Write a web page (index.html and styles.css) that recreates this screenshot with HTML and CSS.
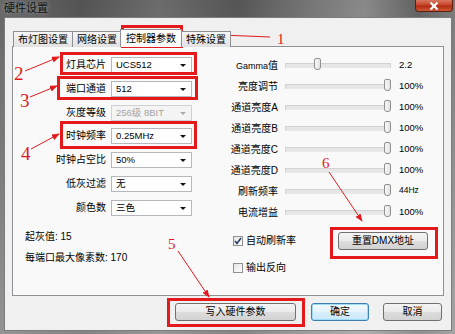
FILE: index.html
```html
<!DOCTYPE html>
<html lang="zh-CN">
<head>
    <meta charset="UTF-8">
    <title>硬件设置</title>
    <link rel="stylesheet" href="styles.css">
</head>
<body>
    <div class="window">
        <div class="titlebar">
            <span class="title">硬件设置</span>
            <span class="close">
                <svg width="10" height="8" viewBox="0 0 10 8"><path d="M1.5 0.5 L8.5 7.5 M8.5 0.5 L1.5 7.5" stroke="#fff" stroke-width="2.2"/></svg>
            </span>
        </div>
        <div class="client">
            <div class="tabs">
                <div class="tab">布灯图设置</div>
                <div class="tab">网络设置</div>
                <div class="tab active">控制器参数</div>
                <div class="tab">特殊设置</div>
            </div>
            <div class="panel">
                <div class="left">
                    <div class="fields">
                        <span class="f-label">灯具芯片</span><div class="combo">UCS512</div>
                        <span class="f-label">端口通道</span><div class="combo">512</div>
                        <span class="f-label">灰度等级</span><div class="combo disabled">256级 8BIT</div>
                        <span class="f-label">时钟频率</span><div class="combo">0.25MHz</div>
                        <span class="f-label">时钟占空比</span><div class="combo">50%</div>
                        <span class="f-label">低灰过滤</span><div class="combo">无</div>
                        <span class="f-label">颜色数</span><div class="combo">三色</div>
                    </div>
                    <p class="info">起灰值: 15</p>
                    <p class="info">每端口最大像素数: 170</p>
                </div>
                <div class="right">
                    <div class="sliders">
                        <span class="s-label"><small>Gamma</small>值</span><div class="slider"><span class="thumb" style="--v: 0.3"></span></div><span class="s-val">2.2</span>
                        <span class="s-label">亮度调节</span><div class="slider"><span class="thumb" style="--v: 1"></span></div><span class="s-val">100%</span>
                        <span class="s-label">通道亮度A</span><div class="slider"><span class="thumb" style="--v: 1"></span></div><span class="s-val">100%</span>
                        <span class="s-label">通道亮度B</span><div class="slider"><span class="thumb" style="--v: 1"></span></div><span class="s-val">100%</span>
                        <span class="s-label">通道亮度C</span><div class="slider"><span class="thumb" style="--v: 1"></span></div><span class="s-val">100%</span>
                        <span class="s-label">通道亮度D</span><div class="slider"><span class="thumb" style="--v: 1"></span></div><span class="s-val">100%</span>
                        <span class="s-label">刷新频率</span><div class="slider"><span class="thumb" style="--v: 1"></span></div><span class="s-val small">44Hz</span>
                        <span class="s-label">电流增益</span><div class="slider"><span class="thumb" style="--v: 1"></span></div><span class="s-val">100%</span>
                    </div>
                    <div class="opts">
                        <label class="check"><span class="box checked"><svg width="8" height="8" viewBox="0 0 8 8"><path d="M1 4 L3 6.5 L7 1" fill="none" stroke="#2a3f6e" stroke-width="1.6"/></svg></span>自动刷新率</label>
                        <button class="btn">重置DMX地址</button>
                        <label class="check"><span class="box"></span>输出反向</label>
                    </div>
                </div>
            </div>
            <div class="actions">
                <button class="btn write">写入硬件参数</button>
                <button class="btn default">确定</button>
                <button class="btn">取消</button>
            </div>
        </div>

        <!-- annotation marks drawn over the dialog -->
        <svg class="marks" width="455" height="334" viewBox="0 0 455 334">
            <defs>
                <marker id="head" markerWidth="8" markerHeight="6" refX="7" refY="3" orient="auto" markerUnits="userSpaceOnUse">
                    <path d="M0 0 L8 3 L0 6 z" fill="#e3191b"/>
                </marker>
            </defs>
            <g fill="none" stroke="#e3191b" stroke-width="3">
                <rect x="122.5" y="26.5" width="59" height="20"/>
                <rect x="61.5" y="53.5" width="134" height="20"/>
                <rect x="58.5" y="77.5" width="138" height="21"/>
                <rect x="61.5" y="122.5" width="134" height="25"/>
                <rect x="168.5" y="299.5" width="135" height="26"/>
                <rect x="331.5" y="228.5" width="105" height="29"/>
            </g>
            <g stroke="#e3191b" stroke-width="1" marker-end="url(#head)">
                <line x1="270" y1="37" x2="197" y2="34"/>
                <line x1="25" y1="71" x2="59" y2="57"/>
                <line x1="30" y1="97" x2="57" y2="86"/>
                <line x1="31" y1="149" x2="59" y2="134"/>
                <line x1="178" y1="251" x2="209" y2="297"/>
                <line x1="329" y1="172" x2="362" y2="221"/>
            </g>
            <g class="nums" fill="#e3191b">
                <text x="277" y="44" font-size="15">1</text>
                <text x="14" y="80" font-size="19">2</text>
                <text x="20" y="107" font-size="19">3</text>
                <text x="21" y="160" font-size="19">4</text>
                <text x="168" y="249" font-size="15">5</text>
                <text x="322" y="168" font-size="15">6</text>
            </g>
        </svg>
    </div>
</body>
</html>
```

FILE: styles.css
```css
* {
    box-sizing: border-box;
}
body {
    margin: 0;
    font-family: "Liberation Sans", "Noto Sans CJK SC", sans-serif;
    font-size: 10px;
    color: #000;
    background: #fff;
}
.window {
    position: relative;
    width: 455px;
    height: 334px;
    padding: 0 3px 3px 4px;
    display: flex;
    flex-direction: column;
    background:
        linear-gradient(180deg, rgba(0,0,0,0.08), rgba(255,255,255,0.12) 60%, rgba(255,255,255,0.25)),
        linear-gradient(90deg, #707070, #5a5a5a 18%, #747474 35%, #5c5c5c 52%, #7f7f7f 68%, #949494 80%, #6a6a6a 92%, #868686);
}
.titlebar {
    height: 17px;
    display: flex;
    align-items: flex-start;
}
.title {
    font-size: 11px;
    line-height: 14px;
    padding: 1px 0 0 0;
    color: #111;
    text-shadow: 0 0 5px rgba(255, 255, 255, 0.45);
}
.close {
    margin-left: auto;
    margin-right: -1px;
    width: 38px;
    height: 12px;
    display: flex;
    align-items: center;
    justify-content: center;
    border: 1px solid #5a1f14;
    border-top: none;
    border-radius: 0 0 4px 4px;
    background: linear-gradient(180deg, #d8775f, #c5452a 45%, #b02b12 55%, #d05a35);
}
.client {
    flex: 1;
    background: #f0f0f0;
    border: 1px solid #7c7c7c;
    padding: 11px 0 0 7px;
}
.tabs {
    position: relative;
    z-index: 1;
    display: flex;
    align-items: flex-end;
    height: 18px;
    margin: 0 0 -1px 1px;
}
.tab {
    height: 16px;
    line-height: 15px;
    padding: 0 4px;
    border: 1px solid #8e9096;
    border-bottom: none;
    margin-right: -1px;
    background: linear-gradient(180deg, #f6f6f6, #ececec 50%, #e2e2e2);
    white-space: nowrap;
}
.tab.active {
    height: 18px;
    line-height: 17px;
    padding: 0 5px;
    margin: 0 -1px 0 -1px;
    position: relative;
    background: #fbfbfb;
}
.panel {
    width: 432px;
    height: 250px;
    border: 1px solid #8e9096;
    background: #f9f9f9;
    display: grid;
    grid-template-columns: 203px 1fr;
}
.left {
    padding-top: 10px;
}
.fields {
    display: grid;
    grid-template-columns: 93px 81px;
    grid-auto-rows: 16px;
    column-gap: 5px;
    row-gap: 7.8px;
}
.f-label {
    text-align: right;
    line-height: 16px;
}
.combo {
    position: relative;
    height: 16px;
    line-height: 14px;
    padding-left: 4px;
    font-size: 9.5px;
    border: 1px solid #b5b7bc;
    background: #fff;
}
.combo::after {
    content: "";
    position: absolute;
    right: 5px;
    top: 6px;
    border-left: 3px solid transparent;
    border-right: 3px solid transparent;
    border-top: 3px solid #111;
}
.combo.disabled {
    color: #a3a3a3;
    background: #f4f4f4;
    border-color: #cfd0d2;
}
.combo.disabled::after {
    border-top-color: #a9a9a9;
}
.info {
    margin: 14px 0 0 12px;
    line-height: 14px;
}
.info + .info {
    margin-top: 7px;
}
.right {
    padding-top: 6.5px;
}
.sliders {
    display: grid;
    grid-template-columns: 62px 110px auto;
    grid-auto-rows: 21px;
    column-gap: 5px;
    align-items: center;
}
.s-label {
    text-align: right;
}
.s-label small {
    font-size: 9px;
}
.slider {
    position: relative;
    height: 21px;
}
.slider::before {
    content: "";
    position: absolute;
    left: 2px;
    right: 2px;
    top: 9px;
    height: 3px;
    border: 1px solid #d2d2d2;
    border-bottom-color: #e8e8e8;
    background: #e6e6e6;
}
.thumb {
    position: absolute;
    top: 4px;
    left: calc(var(--v) * (100% - 10px) + 1px);
    width: 7px;
    height: 12px;
    border: 1px solid #8f8f8f;
    border-radius: 2px 2px 3px 3px;
    background: linear-gradient(90deg, #f7f7f7, #e4e4e4);
}
.s-val {
    padding-left: 1px;
    font-size: 9.5px;
}
.s-val.small {
    font-size: 8.5px;
}
.opts {
    display: grid;
    grid-template-columns: 1fr 90px;
    row-gap: 10px;
    margin: 11.5px 15px 0 17px;
}
.check {
    display: flex;
    align-items: center;
    gap: 3px;
    line-height: 14px;
    align-self: start;
    margin-top: 1px;
}
.box {
    width: 10px;
    height: 10px;
    border: 1px solid #8f8f8f;
    background: linear-gradient(135deg, #e6e6e6, #fdfdfd);
    display: flex;
    align-items: center;
    justify-content: center;
}
.btn {
    height: 18px;
    padding: 0;
    font: inherit;
    color: #000;
    line-height: 16px;
    border: 1px solid #707070;
    border-radius: 3px;
    background: linear-gradient(180deg, #f4f4f4, #ebebeb 48%, #dddddd 52%, #d2d2d2);
}
.opts .btn {
    width: 90px;
    margin-top: -1px;
}
.actions {
    display: flex;
    justify-content: flex-end;
    gap: 14px;
    margin-top: 7px;
    padding-right: 9px;
}
.actions .btn {
    width: 59px;
}
.actions .btn.write {
    width: 121px;
    margin-right: 1px;
}
.btn.default {
    width: 58px;
    border-color: #3c7fb1;
    box-shadow: inset 0 0 0 1px #9fdcf7;
    background: linear-gradient(180deg, #f2f9fd, #e6f4fc 48%, #d8eefb 52%, #cbe8f9);
}
.marks {
    position: absolute;
    left: 0;
    top: 0;
    pointer-events: none;
}
.nums {
    font-family: "Liberation Serif", serif;
}
```
